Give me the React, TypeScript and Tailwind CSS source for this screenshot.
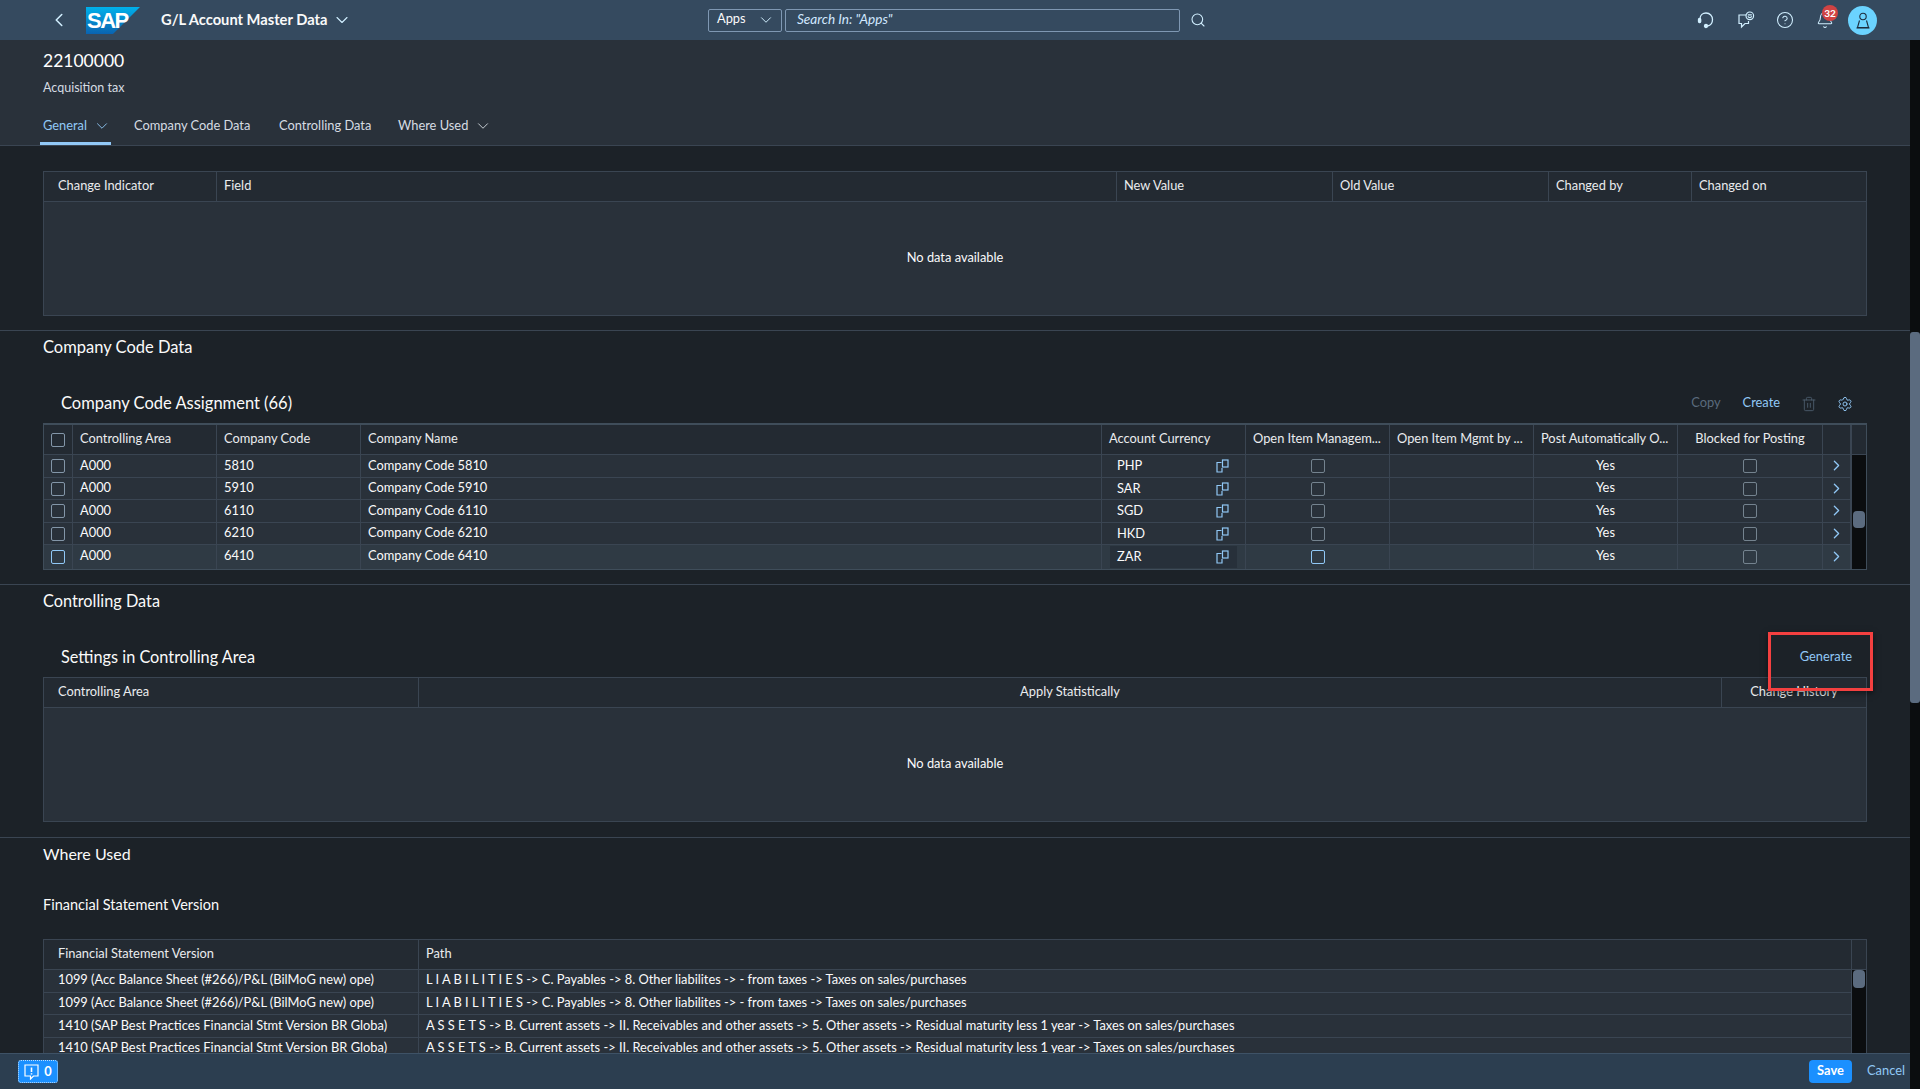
import { Bell, ChevronDown, ChevronLeft, ChevronRight, CircleHelp, Search, Settings, Trash2 } from 'lucide-react';

const companyRows = [
  { code: '5810', currency: 'PHP' },
  { code: '5910', currency: 'SAR' },
  { code: '6110', currency: 'SGD' },
  { code: '6210', currency: 'HKD' },
  { code: '6410', currency: 'ZAR' },
];

const liabilitiesPath = 'L I A B I L I T I E S -> C. Payables -> 8. Other liabilites -> - from taxes -> Taxes on sales/purchases';
const assetsPath = 'A S S E T S -> B. Current assets -> II. Receivables and other assets -> 5. Other assets -> Residual maturity less 1 year -> Taxes on sales/purchases';

const statementRows = [
  { version: '1099 (Acc Balance Sheet (#266)/P&L (BilMoG new) ope)', path: liabilitiesPath },
  { version: '1099 (Acc Balance Sheet (#266)/P&L (BilMoG new) ope)', path: liabilitiesPath },
  { version: '1410 (SAP Best Practices Financial Stmt Version BR Globa)', path: assetsPath },
  { version: '1410 (SAP Best Practices Financial Stmt Version BR Globa)', path: assetsPath },
];

function SapLogo() {
  return (
    <svg width="54" height="27" viewBox="0 0 54 27" className="shrink-0">
      <defs>
        <linearGradient id="sapGrad" x1="0" y1="0" x2="0" y2="1">
          <stop offset="0" stopColor="#00b1eb" />
          <stop offset="1" stopColor="#0a63b0" />
        </linearGradient>
      </defs>
      <polygon points="0,0 54,0 27,27 0,27" fill="url(#sapGrad)" />
      <text x="1" y="21" fill="#ffffff" fontFamily="'Liberation Sans', sans-serif" fontSize="22" fontWeight="700" letterSpacing="-1.5">SAP</text>
    </svg>
  );
}

function Headset() {
  return (
    <svg width="18" height="18" viewBox="0 0 18 18" fill="none" stroke="#d1efff" strokeWidth="1.300">
      <path d="M3 8 C3 4 6 2 9 2 C13 2 15.500 5 15.500 8.500 C15.500 12 13.500 14.500 10.500 15" />
      <rect x="1.500" y="7.500" width="2.200" height="4" rx="1" fill="#d1efff" />
      <circle cx="9" cy="15" r="1.500" fill="#d1efff" />
    </svg>
  );
}

function ChatFeedback() {
  return (
    <svg width="18" height="18" viewBox="0 0 18 18" fill="none" stroke="#d1efff" strokeWidth="1.200">
      <path d="M9 4 H2 V12.500 H4.500 V16 L8 12.500 H11.500 V10" />
      <circle cx="12.800" cy="4.800" r="3.800" fill="#354a5f" />
      <path d="M10.800 3.800 H14.800 M10.800 5.400 C11.800 7 13.800 7 14.800 5.400" />
    </svg>
  );
}

function UserIcon() {
  return (
    <svg width="16" height="17" viewBox="0 0 16 17" fill="none" stroke="#1d2d3e" strokeWidth="1.100">
      <circle cx="8" cy="4.500" r="3.200" />
      <path d="M4.500 8.500 L2.500 15.500 H13.500 L11.500 8.500" />
      <path d="M1.500 16 H14.500" />
    </svg>
  );
}

function ValueHelp() {
  return (
    <svg width="13" height="14" viewBox="0 0 13 14" fill="none" stroke="#91c8f6" strokeWidth="1.200" className="shrink-0">
      <path d="M5.500 3.500 H1 V13 H6 V9" />
      <rect x="6.500" y="1" width="5.500" height="7" />
    </svg>
  );
}

function MessageIcon() {
  return (
    <svg width="15" height="16" viewBox="0 0 15 16" fill="none" stroke="#ffffff" strokeWidth="1.200">
      <path d="M1 1 H14 V12 H9.500 L6.500 15 V12 H1 Z" />
      <path d="M7.500 3.500 V8 M7.500 9.300 V10.500" strokeWidth="1.600" />
    </svg>
  );
}

function Checkbox({ active = false, dim = false }: { active?: boolean; dim?: boolean }) {
  return (
    <span
      className={
        active
          ? 'block w-[14px] h-[14px] rounded-[2px] border border-[#91c8f6]'
          : dim
            ? 'block w-[14px] h-[14px] rounded-[2px] border border-[#74838f]'
            : 'block w-[14px] h-[14px] rounded-[2px] border border-[#8396a8]'
      }
    />
  );
}

function TableScroll({ headerClass, thumbClass }: { headerClass: string; thumbClass: string }) {
  return (
    <div className="w-[15px] shrink-0 flex flex-col border-l border-[#3a4552]">
      <div className={headerClass} />
      <div className="flex-1 bg-[#0b0d0f] px-[1px]">
        <div className={thumbClass} />
      </div>
    </div>
  );
}

function NoData({ heightClass }: { heightClass: string }) {
  return <div className={`${heightClass} pb-[1px] bg-[#29313a] flex items-center justify-center text-[#fafafa]`}>No data available</div>;
}

export default function App() {
  return (
    <div className="relative w-[1920px] h-[1089px] overflow-hidden flex flex-col bg-[#0b0d0f] text-[12.850px] text-[#fafafa] font-['Lato','Liberation_Sans',sans-serif]">
      {/* Shell bar */}
      <header className="h-[40px] shrink-0 bg-[#354a5f] flex items-center">
        <ChevronLeft size={22} strokeWidth={1.700} className="ml-[48px] text-[#d1efff]" />
        <div className="ml-[16px]">
          <SapLogo />
        </div>
        <span className="ml-[21px] w-[168px] pb-[2px] text-[14.700px] whitespace-nowrap font-bold text-[#fafafa]">G/L Account Master Data</span>
        <ChevronDown size={20} strokeWidth={1.300} className="ml-[3px] text-[#d1efff]" />
        <div className="ml-[356px] w-[74px] h-[23px] flex items-center justify-between pl-[8px] pr-[6px] border border-[#7f98b3] rounded-[2px]">
          <span className="pb-[2px]">Apps</span>
          <ChevronDown size={18} strokeWidth={1.300} className="text-[#d1efff]" />
        </div>
        <div className="ml-[3px] w-[395px] h-[23px] flex items-center px-[11px] pb-[2px] border border-[#7f98b3] rounded-[2px] text-[13.600px] italic text-[#d1e8ff]">Search In: "Apps"</div>
        <Search size={16} strokeWidth={1.600} className="ml-[10px] text-[#d1efff]" />
        <div className="ml-auto flex items-center">
          <div className="w-[18px] flex justify-center"><Headset /></div>
          <div className="ml-[22px] w-[18px] flex justify-center"><ChatFeedback /></div>
          <CircleHelp size={18} strokeWidth={1.400} className="ml-[21px] text-[#d1efff]" />
          <div className="relative ml-[22px]">
            <Bell size={18} strokeWidth={1.400} className="text-[#d1efff]" />
            <span className="absolute left-[6px] top-[-6px] w-[16px] h-[16px] rounded-full bg-[#d04343] flex items-center justify-center text-[10px] font-bold text-white">32</span>
          </div>
          <div className="ml-[14px] mr-[43px] w-[29px] h-[29px] rounded-full bg-[#6bd3ff] flex items-center justify-center">
            <UserIcon />
          </div>
        </div>
      </header>

      <div className="flex-1 min-h-0 flex">
        <div className="w-[1910px] shrink-0 flex flex-col">
          <main className="flex-1 min-h-0 overflow-hidden bg-[#1c2228]">
            {/* Object header */}
            <section className="h-[106px] bg-[#29313a] border-b border-[#3a4552] px-[40px] flex flex-col">
              <div className="h-[38px] pl-[3px] pt-[6px] text-[17.500px] leading-[30px] text-white">22100000</div>
              <div className="h-[20px] pl-[3px] text-[12.500px] leading-[20px] text-[#d6dce2]">Acquisition tax</div>
              <nav className="flex-1 pt-[8px] flex items-stretch text-[#d6dce2]">
                <div className="w-[71px] pl-[3px] flex items-center border-b-[3px] border-[#91c8f6] text-[#91c8f6] pt-[3px]">
                  General
                  <ChevronDown size={18} strokeWidth={1.200} className="ml-[6px]" />
                </div>
                <div className="ml-[23px] w-[117px] flex items-center whitespace-nowrap">Company Code Data</div>
                <div className="ml-[28px] w-[91px] flex items-center whitespace-nowrap">Controlling Data</div>
                <div className="ml-[28px] flex items-center whitespace-nowrap">
                  Where Used
                  <ChevronDown size={18} strokeWidth={1.200} className="ml-[6px]" />
                </div>
              </nav>
            </section>

            {/* General */}
            <section className="h-[185px] pt-[25px] px-[43px] border-b border-[#3a4552]">
              <div className="border border-[#3a4552]">
                <div className="grid grid-cols-[173px_900px_216px_216px_143px_1fr] h-[30px] bg-[#232a32] border-b border-[#3a4552] text-[#eaecee]">
                  <div className="pl-[14px] pb-[1px] flex items-center border-r border-[#3a4552]">Change Indicator</div>
                  <div className="pl-[7px] pb-[1px] flex items-center border-r border-[#3a4552]">Field</div>
                  <div className="pl-[7px] pb-[1px] flex items-center border-r border-[#3a4552]">New Value</div>
                  <div className="pl-[7px] pb-[1px] flex items-center border-r border-[#3a4552]">Old Value</div>
                  <div className="pl-[7px] pb-[1px] flex items-center border-r border-[#3a4552]">Changed by</div>
                  <div className="pl-[7px] pb-[1px] flex items-center">Changed on</div>
                </div>
                <NoData heightClass="h-[113px]" />
              </div>
            </section>

            {/* Company Code Data */}
            <section className="h-[254px] px-[43px] border-b border-[#3a4552]">
              <h2 className="h-[33px] pb-[1px] flex items-center text-[16.500px] text-[#fafafa]">Company Code Data</h2>
              <div className="mt-[21px] h-[38px] pl-[18px] pr-[14px] flex items-center justify-between">
                <h3 className="pb-[2px] text-[16.500px] text-[#fafafa]">Company Code Assignment (66)</h3>
                <div className="flex items-center">
                  <span className="pb-[2px] text-[#5a6b7d]">Copy</span>
                  <span className="ml-[22px] pb-[2px] text-[#91c8f6]">Create</span>
                  <Trash2 size={16} strokeWidth={1.300} className="ml-[21px] text-[#4f5f70]" />
                  <Settings size={16} strokeWidth={1.400} className="ml-[20px] text-[#91c8f6]" />
                </div>
              </div>
              <div className="flex border border-t-2 border-[#3f4d5a]">
                <div className="w-[1807px] shrink-0">
                  <div className="grid grid-cols-[29px_144px_144px_741px_144px_144px_144px_144px_145px_28px] h-[30px] bg-[#232a32] border-b border-[#3a4552] text-[#eaecee] whitespace-nowrap">
                    <div className="flex items-center justify-center border-r border-[#3a4552]"><Checkbox /></div>
                    <div className="pl-[7px] pb-[1px] flex items-center border-r border-[#3a4552]">Controlling Area</div>
                    <div className="pl-[7px] pb-[1px] flex items-center border-r border-[#3a4552]">Company Code</div>
                    <div className="pl-[7px] pb-[1px] flex items-center border-r border-[#3a4552]">Company Name</div>
                    <div className="pl-[7px] pb-[1px] flex items-center border-r border-[#3a4552]">Account Currency</div>
                    <div className="pl-[7px] pb-[1px] flex items-center border-r border-[#3a4552]">Open Item Managem...</div>
                    <div className="pl-[7px] pb-[1px] flex items-center border-r border-[#3a4552]">Open Item Mgmt by ...</div>
                    <div className="pl-[7px] pb-[1px] flex items-center border-r border-[#3a4552]">Post Automatically O...</div>
                    <div className="pb-[1px] flex items-center justify-center border-r border-[#3a4552]">Blocked for Posting</div>
                    <div className="border-r border-[#3a4552]" />
                  </div>
                  {companyRows.map((row, i) => {
                    const last = i === companyRows.length - 1;
                    return (
                      <div
                        key={row.code}
                        className={
                          last
                            ? 'grid grid-cols-[29px_144px_144px_741px_144px_144px_144px_144px_145px_28px] h-[23.400px] bg-[#2f3a44]'
                            : 'grid grid-cols-[29px_144px_144px_741px_144px_144px_144px_144px_145px_28px] h-[22.600px] bg-[#29313a] border-b border-[#3a4552]'
                        }
                      >
                        <div className="flex items-center justify-center border-r border-[#3a4552]"><Checkbox active={last} /></div>
                        <div className="pl-[7px] pb-[2px] flex items-center border-r border-[#3a4552]">A000</div>
                        <div className="pl-[7px] pb-[2px] flex items-center border-r border-[#3a4552]">{row.code}</div>
                        <div className="pl-[7px] pb-[2px] flex items-center border-r border-[#3a4552]">Company Code {row.code}</div>
                        <div className="px-[8px] py-[1px] flex border-r border-[#3a4552]">
                          <div className={last ? 'flex-1 flex items-center justify-between pl-[7px] pr-[8px] bg-[#27303a]' : 'flex-1 flex items-center justify-between pl-[7px] pr-[8px]'}>
                            <span className="pb-[1px]">{row.currency}</span>
                            <ValueHelp />
                          </div>
                        </div>
                        <div className="flex items-center justify-center border-r border-[#3a4552]"><Checkbox active={last} dim /></div>
                        <div className="border-r border-[#3a4552]" />
                        <div className="pb-[2px] flex items-center justify-center border-r border-[#3a4552]">Yes</div>
                        <div className="flex items-center justify-center border-r border-[#3a4552]"><Checkbox dim /></div>
                        <div className="pb-[1px] flex items-center justify-center border-r border-[#3a4552]">
                          <ChevronRight size={17} strokeWidth={1.800} className="text-[#91c8f6]" />
                        </div>
                      </div>
                    );
                  })}
                </div>
                <TableScroll headerClass="h-[30px] bg-[#232a32] border-b border-[#3a4552]" thumbClass="mt-[56px] w-[12px] h-[17px] rounded-[4px] bg-[#5b6b7f]" />
              </div>
            </section>

            {/* Controlling Data */}
            <section className="h-[253px] px-[43px] border-b border-[#3a4552]">
              <h2 className="h-[32px] flex items-center text-[16.300px] text-[#fafafa]">Controlling Data</h2>
              <div className="mt-[22px] h-[38px] pl-[18px] pr-[15px] flex items-center justify-between">
                <h3 className="pb-[2px] text-[16.300px] text-[#fafafa]">Settings in Controlling Area</h3>
                <span className="pb-[3px] text-[#91c8f6]">Generate</span>
              </div>
              <div className="border border-[#3a4552]">
                <div className="grid grid-cols-[375px_1303px_1fr] h-[30px] bg-[#232a32] border-b border-[#3a4552] text-[#eaecee]">
                  <div className="pl-[14px] pb-[2px] flex items-center border-r border-[#3a4552]">Controlling Area</div>
                  <div className="pb-[2px] flex items-center justify-center border-r border-[#3a4552]">Apply Statistically</div>
                  <div className="pb-[2px] flex items-center justify-center">Change History</div>
                </div>
                <NoData heightClass="h-[113px]" />
              </div>
            </section>

            {/* Where Used */}
            <section className="px-[43px]">
              <h2 className="h-[34px] pb-[2px] flex items-center text-[16px] text-[#fafafa]">Where Used</h2>
              <h3 className="mt-[21px] h-[24px] pb-[1px] flex items-center text-[14.500px] text-[#fafafa]">Financial Statement Version</h3>
              <div className="mt-[22px] flex border border-[#3a4552]">
                <div className="w-[1807px] shrink-0">
                  <div className="grid grid-cols-[375px_1fr] h-[30px] bg-[#232a32] border-b border-[#3a4552] text-[#eaecee]">
                    <div className="pl-[14px] pb-[2px] flex items-center border-r border-[#3a4552]">Financial Statement Version</div>
                    <div className="pl-[7px] pb-[2px] flex items-center">Path</div>
                  </div>
                  {statementRows.map((row, i) => (
                    <div key={i} className="grid grid-cols-[375px_1fr] h-[22.700px] bg-[#29313a] border-b border-[#3a4552] whitespace-nowrap">
                      <div className="pl-[14px] pb-[2px] flex items-center border-r border-[#3a4552]">{row.version}</div>
                      <div className="pl-[7px] pb-[2px] flex items-center">{row.path}</div>
                    </div>
                  ))}
                </div>
                <TableScroll headerClass="h-[30px] bg-[#232a32] border-b border-[#3a4552]" thumbClass="w-[12px] h-[18px] rounded-[4px] bg-[#5b6b7f]" />
              </div>
            </section>
          </main>

          {/* Footer */}
          <footer className="h-[36px] shrink-0 bg-[#2c3e50] border-t border-[#3e5266] flex items-center pl-[18px] pr-[5px]">
            <button className="w-[40px] h-[23px] rounded-[3px] bg-[#1b90ff] border border-dotted border-white/70 flex items-center justify-center gap-[5px] font-bold text-white">
              <MessageIcon />
              0
            </button>
            <button className="ml-auto w-[43px] h-[23px] pb-[2px] rounded-[4px] bg-[#1b90ff] font-bold text-white">Save</button>
            <button className="ml-[15px] w-[38px] pb-[2px] text-[#91c8f6]">Cancel</button>
          </footer>
        </div>

        {/* Page scrollbar */}
        <div className="w-[10px] shrink-0 bg-[#0b0d0f]">
          <div className="mt-[292px] h-[371px] rounded-[3px] bg-[#5b6b7f]" />
        </div>
      </div>

      {/* Annotation from the screenshot */}
      <div className="absolute left-[1768px] top-[632px] w-[105px] h-[59px] border-[3px] border-[#f44040] shadow-[0_2px_6px_rgba(0,0,0,0.5)]" />
    </div>
  );
}
